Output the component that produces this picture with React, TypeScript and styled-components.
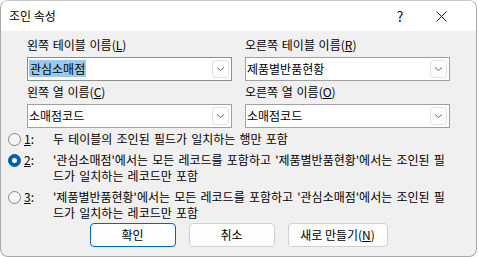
import React from "react";
import styled, { createGlobalStyle } from "styled-components";

const GlobalStyle = createGlobalStyle`
  html, body {
    margin: 0;
    padding: 0;
    background: #ffffff;
  }
  body {
    font-family: "Noto Sans CJK KR", "Noto Sans", sans-serif;
    font-size: 12px;
    color: #000;
  }
`;

const Window = styled.div`
  width: 477px;
  height: 257px;
  box-sizing: border-box;
  border: 1px solid #a8a8a8;
  border-top-color: #c8c8c8;
  border-radius: 8px;
  background: #f0f0f0;
  overflow: hidden;
  display: flex;
  flex-direction: column;
`;

const TitleBar = styled.div`
  height: 30px;
  flex: none;
  background: #ffffff;
  display: flex;
  align-items: center;
  padding-left: 8px;
`;

const Title = styled.div`
  flex: 1;
  font-size: 12px;
  line-height: 16px;
  margin-top: -1px;
`;

const TitleButton = styled.div<{ $w: number }>`
  width: ${p => p.$w}px;
  height: 30px;
  display: flex;
  align-items: center;
  justify-content: center;
  font-size: 14px;
  color: #111;
`;

const Body = styled.div`
  flex: 1;
  padding-top: 6px;
`;

const FieldGrid = styled.div`
  display: grid;
  grid-template-columns: 205px 205px;
  column-gap: 13px;
  row-gap: 3px;
  margin-left: 26px;
`;

const Field = styled.div`
  display: flex;
  flex-direction: column;
  gap: 4px;
`;

const Label = styled.div`
  line-height: 16px;
  height: 16px;
  white-space: nowrap;
  word-spacing: 1px;
`;

const Combo = styled.div<{ $focused?: boolean }>`
  height: 24px;
  box-sizing: border-box;
  border: 1px solid ${p => (p.$focused ? "#8f8f8f" : "#a0a0a0")};
  background: #ffffff;
  display: flex;
  align-items: center;
  padding: 0 2px 0 1px;
`;

const ComboText = styled.span`
  flex: 1;
  white-space: nowrap;
  line-height: 16px;
`;

const Highlight = styled.span`
  background: #99c9ef;
  padding: 0 1px;
`;

const DropButton = styled.div`
  width: 17px;
  height: 18px;
  box-sizing: border-box;
  border: 1px solid #e2e2e2;
  border-radius: 3px;
  background: #fdfdfd;
  display: flex;
  align-items: center;
  justify-content: center;
`;

const Options = styled.div`
  margin-top: 3px;
  margin-left: 7px;
  display: flex;
  flex-direction: column;
  gap: 5px;
`;

const OptionRow = styled.div`
  display: grid;
  grid-template-columns: 13px 26px 1fr;
  column-gap: 3px;
  align-items: start;
  line-height: 16px;
`;

const Radio = styled.span<{ $checked?: boolean }>`
  width: 13px;
  height: 13px;
  margin-top: 2px;
  box-sizing: border-box;
  border-radius: 50%;
  border: 1px solid ${p => (p.$checked ? "#005fb8" : "#858585")};
  background: ${p => (p.$checked ? "#005fb8" : "#f6f6f6")};
  display: flex;
  align-items: center;
  justify-content: center;
  &::after {
    content: "";
    display: ${p => (p.$checked ? "block" : "none")};
    width: 5px;
    height: 5px;
    border-radius: 50%;
    background: #ffffff;
  }
`;

const OptionKey = styled.span`
  white-space: nowrap;
`;

const OptionText = styled.div`
  white-space: nowrap;
  word-spacing: 1.5px;
`;

const OptionLine = styled.div`
  height: 16px;
`;

const ButtonRow = styled.div`
  margin-top: 2px;
  display: flex;
  justify-content: center;
  gap: 13px;
`;

const Button = styled.button<{ $w: number; $default?: boolean }>`
  width: ${p => p.$w}px;
  height: 24px;
  box-sizing: border-box;
  border: 1px solid ${p => (p.$default ? "#0067c0" : "#d0d0d0")};
  border-radius: 4px;
  background: #fdfdfd;
  font-family: inherit;
  font-size: 12px;
  line-height: 16px;
  color: #000;
  padding: 0;
`;

const Chevron = () => (
  <svg width="9" height="6" viewBox="0 0 9 6">
    <path d="M1 1.5 L4.5 4.5 L8 1.5" fill="none" stroke="#6a6a6a" strokeWidth="1" />
  </svg>
);

const CloseIcon = () => (
  <svg width="11" height="11" viewBox="0 0 11 11">
    <path d="M0.5 0.5 L10.5 10.5 M10.5 0.5 L0.5 10.5" stroke="#1a1a1a" strokeWidth="1" />
  </svg>
);

const fields = [
  { label: "왼쪽 테이블 이름", key: "L", value: "관심소매점", selected: true },
  { label: "오른쪽 테이블 이름", key: "R", value: "제품별반품현황" },
  { label: "왼쪽 열 이름", key: "C", value: "소매점코드" },
  { label: "오른쪽 열 이름", key: "O", value: "소매점코드" },
];

const options = [
  { key: "1", lines: ["두 테이블의 조인된 필드가 일치하는 행만 포함"] },
  {
    key: "2",
    checked: true,
    lines: [
      "'관심소매점'에서는 모든 레코드를 포함하고 '제품별반품현황'에서는 조인된 필",
      "드가 일치하는 레코드만 포함",
    ],
  },
  {
    key: "3",
    lines: [
      "'제품별반품현황'에서는 모든 레코드를 포함하고 '관심소매점'에서는 조인된 필",
      "드가 일치하는 레코드만 포함",
    ],
  },
];

const App: React.FC = () => {
  return (
    <>
      <GlobalStyle />
      <Window>
        <TitleBar>
          <Title>조인 속성</Title>
          <TitleButton $w={36}>?</TitleButton>
          <TitleButton $w={46}>
            <CloseIcon />
          </TitleButton>
          <TitleButton $w={12} />
        </TitleBar>
        <Body>
          <FieldGrid>
            {fields.map(f => (
              <Field key={f.key}>
                <Label>
                  {f.label}(<u>{f.key}</u>)
                </Label>
                <Combo $focused={f.selected}>
                  <ComboText>
                    {f.selected ? <Highlight>{f.value}</Highlight> : f.value}
                  </ComboText>
                  <DropButton>
                    <Chevron />
                  </DropButton>
                </Combo>
              </Field>
            ))}
          </FieldGrid>
          <Options>
            {options.map(o => (
              <OptionRow key={o.key}>
                <Radio $checked={o.checked} />
                <OptionKey>
                  <u>{o.key}</u>:
                </OptionKey>
                <OptionText>
                  {o.lines.map((l, i) => (
                    <OptionLine key={i}>{l}</OptionLine>
                  ))}
                </OptionText>
              </OptionRow>
            ))}
          </Options>
          <ButtonRow>
            <Button $w={86} $default>확인</Button>
            <Button $w={86}>취소</Button>
            <Button $w={100}>
              새로 만들기(<u>N</u>)
            </Button>
          </ButtonRow>
        </Body>
      </Window>
    </>
  );
};

export default App;
